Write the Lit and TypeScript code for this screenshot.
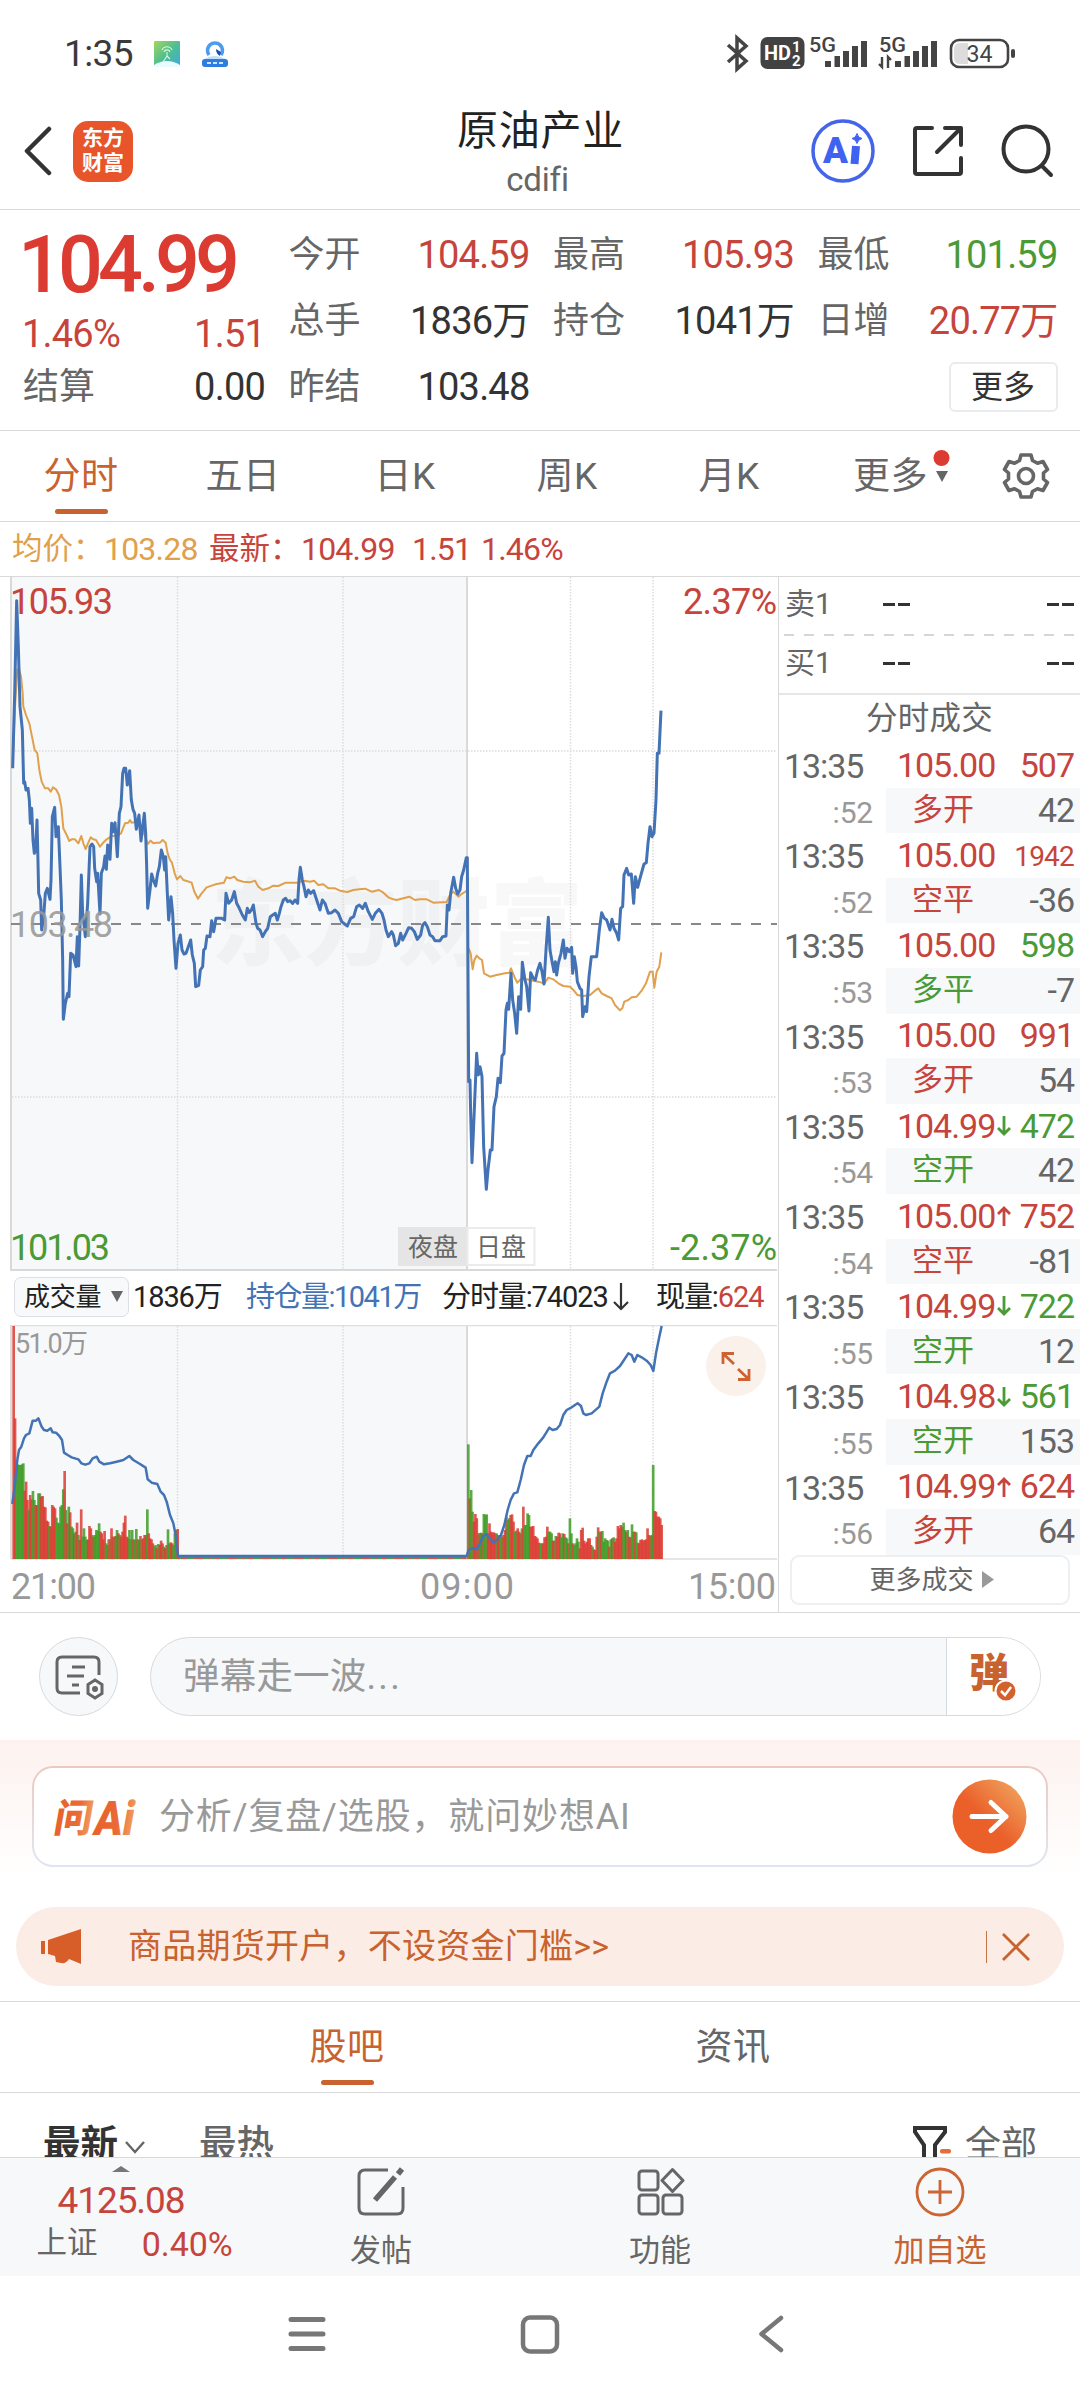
import { LitElement, html, svg, css } from "lit";
import { customElement } from "lit/decorators.js";
import { classMap } from "lit/directives/class-map.js";

/* Traced series, in thirds of a CSS pixel. */
const NIGHT_PRICE = "38,625 44,400 50,122 55,260 60,440 67,510 71,670 74,665 78,690 84,685 88,720 91,790 95,745 99,840 103,880 107,870 111,780 113,860 116,1000 122,1020 125,1110 131,1070 136,1000 142,985 150,1018 153,960 157,770 164,742 168,830 175,800 180,920 184,1020 188,1200 190,1378 196,1330 203,1300 207,1310 212,1180 219,1185 228,1220 232,1130 236,1218 240,1100 244,945 248,1060 256,1130 263,1030 270,860 276,852 281,860 284,925 290,965 293,940 300,1062 304,940 311,920 315,888 319,928 323,855 330,898 335,790 340,815 345,788 352,890 358,760 363,740 368,640 372,625 377,625 382,675 389,632 394,720 399,748 404,760 409,808 417,765 423,843 428,800 433,760 437,820 440,920 443,1045 450,990 455,942 460,960 467,978 473,940 478,920 484,870 490,890 494,930 497,890 502,1000 506,1080 513,1010 518,1060 522,1140 528,1225 534,1150 541,1125 546,1170 552,1182 558,1180 565,1160 572,1140 577,1185 583,1210 587,1280 596,1276 601,1230 608,1220 611,1170 616,1165 621,1128 630,1130 635,1082 641,1115 648,1075 656,1075 665,1075 674,1080 678,1000 686,1030 695,1020 703,995 710,1030 718,1045 727,1065 736,1080 742,1045 748,1058 754,1050 760,1035 768,1090 773,1105 780,1110 788,1130 796,1115 803,1105 811,1070 818,1065 826,1060 832,1080 838,1060 843,1040 850,1020 857,1015 863,1025 870,1022 878,1030 885,1020 893,1030 897,960 901,922 907,960 912,980 918,1010 925,990 932,1000 941,992 950,1020 960,1050 967,1020 975,1030 985,1060 995,1058 1005,1050 1015,1060 1025,1085 1034,1092 1042,1098 1052,1075 1061,1070 1070,1040 1078,1035 1088,1045 1096,1030 1105,1055 1117,1078 1126,1060 1137,1048 1146,1060 1152,1080 1158,1110 1165,1130 1175,1115 1180,1125 1187,1157 1195,1150 1202,1120 1208,1140 1218,1120 1226,1103 1235,1105 1243,1115 1252,1138 1262,1125 1268,1095 1275,1088 1282,1100 1290,1125 1298,1130 1305,1142 1320,1142 1328,1130 1338,1128 1342,1035 1347,1050 1352,1000 1361,952 1367,985 1373,1002 1380,990 1385,950 1391,930 1399,893 1402,893 1406,1565";
const DAY_PRICE = "1406,1565 1410,1560 1412,1660 1416,1808 1420,1720 1430,1480 1435,1545 1440,1520 1446,1550 1451,1760 1459,1888 1464,1830 1471,1770 1476,1770 1482,1640 1489,1610 1494,1555 1501,1568 1506,1488 1512,1480 1518,1350 1522,1330 1526,1348 1533,1240 1538,1320 1544,1360 1550,1420 1556,1310 1562,1348 1567,1207 1574,1255 1580,1280 1587,1353 1592,1238 1600,1255 1606,1260 1613,1230 1620,1210 1626,1235 1632,1272 1638,1170 1645,1072 1650,1170 1657,1210 1662,1235 1666,1205 1670,1245 1675,1210 1683,1180 1690,1140 1695,1195 1701,1165 1708,1175 1715,1162 1718,1240 1723,1190 1728,1220 1732,1265 1740,1285 1745,1290 1748,1370 1755,1340 1760,1355 1767,1250 1774,1190 1790,1190 1798,1110 1805,1058 1813,1075 1820,1080 1830,1110 1836,1078 1842,1105 1850,1120 1856,1140 1862,1045 1868,1040 1872,945 1880,925 1886,945 1894,942 1901,1030 1906,950 1913,982 1920,955 1927,930 1932,912 1939,908 1944,850 1950,800 1956,830 1962,820 1968,720 1972,580 1977,580 1983,452";
const NIGHT_AVG = "38,610 45,440 52,328 58,330 63,350 68,400 70,440 78,465 88,490 96,530 104,570 112,580 118,630 125,665 135,685 145,685 152,695 159,682 168,688 177,705 184,740 190,805 200,825 208,843 215,838 225,838 235,850 244,828 250,850 257,867 264,850 272,832 280,838 288,840 300,860 308,850 320,838 335,828 350,828 363,820 375,790 385,788 390,780 395,788 410,785 425,800 443,852 452,842 460,850 470,848 480,848 488,840 497,848 503,880 510,900 516,908 524,940 531,958 541,948 550,960 560,963 575,968 583,995 594,1016 605,1000 620,982 635,977 650,972 672,968 679,952 690,955 703,950 712,960 730,965 750,967 765,962 775,980 788,990 805,985 820,977 835,978 857,968 880,968 893,968 912,962 930,965 942,962 955,975 970,973 985,985 1005,985 1020,992 1042,996 1060,990 1078,988 1095,986 1115,995 1137,990 1150,998 1165,1012 1180,1018 1190,1020 1210,1015 1228,1010 1245,1020 1260,1018 1280,1018 1300,1028 1340,1026 1350,1005 1360,995 1375,1010 1388,1000 1399,993";
const DAY_AVG = "1406,1165 1412,1180 1418,1228 1423,1200 1430,1187 1438,1195 1446,1200 1452,1240 1470,1250 1490,1245 1515,1240 1528,1238 1533,1225 1545,1255 1552,1268 1562,1258 1580,1258 1600,1262 1615,1265 1625,1268 1632,1272 1645,1253 1660,1258 1675,1270 1690,1278 1710,1280 1720,1290 1732,1305 1750,1308 1770,1305 1785,1292 1795,1285 1805,1300 1820,1308 1835,1315 1845,1335 1860,1351 1867,1345 1873,1325 1885,1320 1895,1312 1910,1310 1925,1292 1938,1270 1950,1235 1958,1235 1963,1283 1970,1235 1978,1220 1984,1177";
const OPEN_INTEREST = "37,912 45,850 52,780 57,750 64,740 72,715 78,705 88,700 98,662 108,662 115,655 125,680 132,690 142,692 152,685 158,697 168,698 178,708 186,720 192,758 203,765 215,772 235,778 244,790 256,794 268,790 278,775 290,770 298,785 312,793 330,790 350,785 370,780 388,768 400,780 420,792 437,803 443,838 455,848 472,852 482,875 492,885 500,905 510,945 520,970 528,1010 534,1068 1400,1068 1406,1050 1415,1045 1430,1048 1440,1030 1450,1008 1460,1003 1470,1015 1482,1028 1493,1018 1503,1005 1513,975 1523,930 1532,900 1542,880 1552,877 1562,840 1572,795 1582,768 1592,768 1600,750 1615,730 1630,712 1648,683 1658,690 1670,687 1680,675 1690,645 1700,630 1715,622 1733,610 1743,618 1750,640 1758,645 1775,640 1798,620 1808,580 1820,545 1830,520 1845,512 1860,498 1872,480 1885,460 1895,465 1903,485 1912,465 1925,472 1940,482 1952,495 1960,513 1968,460 1978,410 1985,378";

const NIGHT_VOL = "378r 655r 780g 793g 795g 795g 793g 790g 872r 845r 900r 930g 885r 898r 873g 900g 915r 915r 880g 880g 890r 888r 920r 922r 962r 965r 978g 980r 915r 920r 925r 953g 968g 970g 920g 915g 868g 813r 930g 970r 920g 937r 980g 985g 1000r 995g 968r 1005g 1020r 928r 1010g 985g 1010g 1020g 1018r 978r 985r 1005g 1010r 1005g 990g 992g 970g 995r 1000r 1018r 993r 1030g 1035g 1018r 1018g 985r 1010r 1010g 1008r 990g 1000r 1005g 1010r 995r 968r 947r 1010r 1015r 990g 1018g 990g 1018r 1020g 987g 1018r 1020g 1008r 1018g 1015r 1005r 1005r 928g 1000r 1015r 1018r 1030r 1040g 1035g 1045r 1032g 1035r 1022r 1030r 1040g 1045r 1035r 988g 1030g 1027r 1030r 1035g 1000g 990g 987r";
const DAY_VOL = "733g 895r 870g 935g 965r 942r 955r 1000g 1000r 998g 1000r 942g 945g 943g 1000r 970r 995r 998r 997r 1000r 1000g 1005r 1015r 1005g 1010g 1005r 990r 950r 960g 955g 945r 943r 965r 995g 992g 985r 995r 1000r 985g 920r 975g 975g 940g 945g 980r 980r 978r 1008r 1010r 1015r 1028r 1030g 1030g 1030r 1012r 1010r 980r 995g 995g 1000g 1022r 1022r 1008g 1010r 998r 1000r 1012g 1000g 1002r 1012g 1015g 1030r 955g 1000g 1030r 1035g 1030g 1015g 1025g 1045r 990r 983r 1022r 1030r 1025r 1015r 1015r 1035r 1040g 1048r 1050r 1010r 982r 995g 995r 993g 1025g 1015g 1020g 1022g 1040r 1018g 1015r 1012g 1025r 1015r 978r 985r 975r 980r 968g 990g 995r 990g 1010r 1012r 973g 995g 995r 997g 1028g 1030r 1020r 1018r 1022r 1020r 1018r 985r 1005r 1008g 1005r 795g 933r 935r 950r 950r 955r 975r";

const BASE = 1077;
const bars = (src: string, x0: number, x1: number) => {
  const items = src.split(" ");
  const step = (x1 - x0) / (items.length - 1);
  return items.map((t, i) => {
    const top = parseInt(t, 10);
    return svg`<rect class=${t.endsWith("g") ? "bg" : "br"} x=${x0 + i * step - 4} y=${top} width="8" height=${BASE - top}/>`;
  });
};

const TRADES: [string, string, string, string, string, string, string, string][] = [
  // second, price, arrow, volume, volume tone, kind, kind tone, change
  ["52", "105.00", "", "507", "up", "多开", "up", "42"],
  ["52", "105.00", "", "1942", "up", "空平", "up", "-36"],
  ["53", "105.00", "", "598", "down", "多平", "down", "-7"],
  ["53", "105.00", "", "991", "up", "多开", "up", "54"],
  ["54", "104.99", "d", "472", "down", "空开", "down", "42"],
  ["54", "105.00", "u", "752", "up", "空平", "up", "-81"],
  ["55", "104.99", "d", "722", "down", "空开", "down", "12"],
  ["55", "104.98", "d", "561", "down", "空开", "down", "153"],
  ["56", "104.99", "u", "624", "up", "多开", "up", "64"],
];

const shared = css`
  :host { display: block; font-family: Roboto, "Noto Sans CJK SC", sans-serif; color: #333; }
  * { box-sizing: border-box; }
  svg { display: block; flex: none; }
  .up { color: #c6443c; }
  .down { color: #4a9a35; }
`;

@customElement("status-bar")
class StatusBar extends LitElement {
  static styles = [shared, css`
    .bar { display: flex; align-items: center; height: 108px; padding: 0 64px; justify-content: space-between; }
    .left { display: flex; align-items: center; }
    .time { font-size: 37px; letter-spacing: -0.6px; margin-right: 21px; color: #3a3a3a; line-height: 40px; }
    .a { margin-right: 22px; }
  `];
  render() {
    return html`<div class="bar">
      <div class="left">
        <span class="time">1:35</span>
        <svg class="a" width="26" height="26" viewBox="0 0 26 26">
          <defs><linearGradient id="g" x1="0" y1="0" x2="1" y2="1"><stop offset="0" stop-color="#a4d65e"/><stop offset=".5" stop-color="#4fbf8f"/><stop offset="1" stop-color="#3fa9e0"/></linearGradient></defs>
          <rect width="26" height="26" rx="1" fill="url(#g)"/>
          <g fill="none" stroke="#d9f5dc" stroke-width="1.1"><path d="M8 9a5.5 5.5 0 0 1 10 0M10 11a3.2 3.2 0 0 1 6 0M13 11v4l-4 6M13 15l3 3"/></g>
          <path d="M0 24Q13 16 26 24V26H0Z" fill="#e9fbff"/>
        </svg>
        <svg width="26" height="26" viewBox="0 0 26 26">
          <path d="M7 14a7.500 7.500 0 1 1 12 0" fill="none" stroke="#4b9cf0" stroke-width="3.6"/>
          <path d="M14 8l5 3-1 4q-4-2-4-7z" fill="#1c4fae"/>
          <path d="M2 18Q13 12 24 18z" fill="#bfe0ff"/>
          <rect y="18" width="26" height="8" rx="3" fill="#2f7be0"/>
          <path d="M5 22h4M11 22h4M17 22h4" stroke="#cfe4ff" stroke-width="2"/>
        </svg>
      </div>
      <svg width="290" height="40" viewBox="726 34 290 40">
        <path d="M728 45l18 16-9 8V38l9 8-18 16" fill="none" stroke="#444" stroke-width="3.500"/>
        <rect x="760.500" y="37" width="44" height="32" rx="7" fill="#424242"/>
        <g fill="#fff" font-weight="700"><text x="764" y="60" font-size="20" textLength="27" lengthAdjust="spacingAndGlyphs">HD</text><text x="792" y="52" font-size="15">1</text><text x="792" y="66" font-size="15">2</text></g>
        <g fill="#444" font-weight="500" font-size="20"><text x="809" y="52" textLength="27" lengthAdjust="spacingAndGlyphs">5G</text><text x="879" y="52" textLength="27" lengthAdjust="spacingAndGlyphs">5G</text></g>
        <g fill="#444">
          <rect x="825" y="61" width="6" height="6"/><rect x="834.500" y="56" width="5.500" height="11"/><rect x="843" y="51" width="6" height="16"/><rect x="852" y="46" width="6" height="21"/><rect x="861" y="41" width="6" height="26"/>
          <rect x="895" y="61" width="6" height="6"/><rect x="904.500" y="56" width="5.500" height="11"/><rect x="913" y="51" width="6" height="16"/><rect x="922" y="46" width="6" height="21"/><rect x="931" y="41" width="6" height="26"/>
        </g>
        <path d="M882 57v10l-3-3M888 68V57l3 3" fill="none" stroke="#444" stroke-width="2.4"/>
        <rect x="951" y="40" width="57" height="27" rx="8" fill="#fff" stroke="#444" stroke-width="2.6"/>
        <path d="M960 43h8v21h-8q-6 0-6-6v-9q0-6 6-6z" fill="#dcdcdc"/>
        <rect x="1011" y="49" width="4" height="9" rx="2" fill="#444"/>
        <text x="966.500" y="62" font-size="23" fill="#444" textLength="26" lengthAdjust="spacingAndGlyphs">34</text>
      </svg>
    </div>`;
  }
}

@customElement("title-bar")
class TitleBar extends LitElement {
  static styles = [shared, css`
    .bar { height: 102px; border-bottom: 1px solid #d9d9d9; display: grid; grid-template-columns: 393px 1fr 391px; padding: 0 25px 0 22px; }
    .left { display: flex; align-items: center; height: 86px; }
    .logo { width: 60px; height: 61px; border-radius: 15px; background: #e9552b; color: #fff; font-weight: 700; font-size: 21px; line-height: 25px; text-align: center; padding-top: 5px; margin-left: 20px; }
    .mid { display: flex; flex-direction: column; align-items: center; }
    .name { font-size: 41px; line-height: 46px; letter-spacing: .8px; color: #222; margin-right: -2px; }
    .code { font-size: 33px; line-height: 40px; letter-spacing: -.2px; color: #666; margin: 6px 4px 0 0; }
    .right { display: flex; align-items: center; justify-content: flex-end; height: 86px; }
    .b { margin: 0 37px; }
  `];
  render() {
    return html`<div class="bar">
      <div class="left">
        <svg width="31" height="50" viewBox="0 0 31 50"><path d="M27 3L5 25 27 47" fill="none" stroke="#333" stroke-width="4.5" stroke-linecap="round" stroke-linejoin="round"/></svg>
        <div class="logo">东方<br>财富</div>
      </div>
      <div class="mid"><span class="name">原油产业</span><span class="code">cdifi</span></div>
      <div class="right">
        <svg width="64" height="64" viewBox="0 0 64 64">
          <circle cx="32" cy="32" r="30" fill="none" stroke="#4464ea" stroke-width="3.500"/>
          <text x="12" y="43.500" font-size="36" font-weight="900" fill="#3f62f0" textLength="25" lengthAdjust="spacingAndGlyphs">A</text>
          <path d="M45 27L43.500 45" stroke="#3f62f0" stroke-width="8"/>
          <path d="M46 14.500q1 4.500 5 5q-4 1-5 5q-1-4-5-5q4-.5 5-5z" fill="#3f62f0" stroke="#3f62f0"/>
        </svg>
        <svg class="b" width="52" height="52" viewBox="0 0 52 52"><path d="M20 3H5q-2 0-2 2v42q0 2 2 2h42q2 0 2-2V33M33 3h16v17M49 3L25 27" fill="none" stroke="#333" stroke-width="4" stroke-linecap="round" stroke-linejoin="round"/></svg>
        <svg width="54" height="54" viewBox="0 0 54 54"><circle cx="25" cy="25" r="22.500" fill="none" stroke="#333" stroke-width="4"/><path d="M41 42l9 9" stroke="#333" stroke-width="4" stroke-linecap="round"/></svg>
      </div>
    </div>`;
  }
}

@customElement("quote-panel")
class QuotePanel extends LitElement {
  static styles = [shared, css`
    .panel { height: 221px; border-bottom: 1px solid #d9d9d9; padding: 12px 23px 0 22px; display: grid; grid-template-columns: 243px 240px 240px 239px; column-gap: 24.500px; font-size: 38px; letter-spacing: -.8px; }
    .col { display: flex; flex-direction: column; }
    .row { display: flex; justify-content: space-between; align-items: center; height: 66px; line-height: 66px; white-space: nowrap; }
    .label { color: #666; font-size: 36px; letter-spacing: .1px; margin-left: -1px; }
    .price { height: 86px; line-height: 86px; font-size: 79px; font-weight: 500; letter-spacing: -4.900px; margin-left: -4px; color: #dc3b32; }
    .chg { height: 46px; line-height: 46px; margin-top: 3px; margin-bottom: -3px; }
    .chg + .row .label { margin-left: 1px; }
    .more { width: 109px; height: 50px; line-height: 47px; margin: -1px 0 0 auto; text-align: center; border: 2px solid #e9ebee; border-radius: 6px; font-size: 32px; letter-spacing: 0; }
  `];
  cell(label: string, value: string, tone = "") {
    return html`<div class="row"><span class="label">${label}</span><span class=${tone}>${value}</span></div>`;
  }
  render() {
    return html`<div class="panel">
      <div class="col">
        <div class="price">104.99</div>
        <div class="row chg up"><span>1.46%</span><span>1.51</span></div>
        ${this.cell("结算", "0.00")}
      </div>
      <div class="col">${this.cell("今开", "104.59", "up")}${this.cell("总手", "1836万")}${this.cell("昨结", "103.48")}</div>
      <div class="col">${this.cell("最高", "105.93", "up")}${this.cell("持仓", "1041万")}</div>
      <div class="col">${this.cell("最低", "101.59", "down")}${this.cell("日增", "20.77万", "up")}<div class="row"><span class="more">更多</span></div></div>
    </div>`;
  }
}

@customElement("period-tabs")
class PeriodTabs extends LitElement {
  static styles = [shared, css`
    .tabs { height: 91px; border-bottom: 1px solid #d9d9d9; display: flex; font-size: 37px; color: #666; }
    .tab { width: 162px; flex: none; display: flex; flex-direction: column; align-items: center; line-height: 91px; height: 90px; letter-spacing: .5px; }
    .on { color: #c8622f; }
    .line { width: 53px; height: 5px; border-radius: 3px; background: #c8622f; margin-top: -13px; }
    .more { width: 143px; flex-direction: row; padding-left: 43px; white-space: nowrap; }
    .flag { margin: -16px 0 0 3px; }
    .gear { margin: 20px 0 0 48px; }
  `];
  render() {
    return html`<div class="tabs">
      ${["分时", "五日", "日K", "周K", "月K"].map((t, i) => html`<div class=${classMap({ tab: true, on: i === 0 })}>${t}${i === 0 ? html`<span class="line"></span>` : ""}</div>`)}
      <div class="tab more">更多<svg class="flag" width="20" height="44" viewBox="0 0 20 44"><circle cx="10.500" cy="12" r="8" fill="#dc3b32"/><path d="M5 25h12l-6 11z" fill="#666"/></svg></div>
      <svg class="gear" width="50" height="50" viewBox="-25 -25 50 50" fill="none" stroke="#666" stroke-width="3.600" stroke-linejoin="round">
        <path d="M-5-21H5L6.500-15.500L11.500-12.700L17-14.500L21.500-6.500L17.500-3V3L21.500 6.500L17 14.500L11.500 12.700L6.500 15.500L5 21H-5L-6.500 15.500L-11.500 12.700L-17 14.500L-21.500 6.500L-17.500 3V-3L-21.500-6.500L-17-14.500L-11.500-12.700L-6.500-15.500Z"/><circle r="7.500"/>
      </svg>
    </div>`;
  }
}

@customElement("price-chart")
class PriceChart extends LitElement {
  static styles = [shared, css`
    .t36 { font-size: 36px; }
    .red { fill: #c6443c; } .green { fill: #4a9a35; } .gray { fill: #999; }
    .grid { stroke: #dcdcdc; stroke-width: 1.500; stroke-dasharray: 1.500 1.500; fill: none; }
    .axis { stroke: #d9d9d9; stroke-width: 2; fill: none; }
    .price { fill: none; stroke: #4473b5; stroke-width: 9; stroke-linejoin: round; }
    .avg { fill: none; stroke: #e0a04c; stroke-width: 6; stroke-linejoin: round; }
    .oi { fill: none; stroke: #4473b5; stroke-width: 7.500; stroke-linejoin: round; }
    .br { fill: #db3c33; fill-opacity: .85; } .bg { fill: #3f9c27; fill-opacity: .85; }
    .mark { font-family: "Noto Sans CJK SC", sans-serif; font-weight: 900; font-size: 94px; fill: #000; fill-opacity: .028; }
    .tag { font-size: 25px; fill: #666; }
    .info { height: 54px; display: flex; align-items: center; padding-left: 14px; font-size: 29px; letter-spacing: -1.100px; line-height: 50px; white-space: nowrap; color: #222; padding-bottom: 3px; }
    .select { flex: none; display: flex; align-items: center; gap: 10px; width: 115px; height: 40px; border: 1px solid #dcdfe4; border-radius: 7px; background: #f8f9fb; padding-left: 9px; font-size: 26px; letter-spacing: -.3px; line-height: 36px; }
    .v1 { width: 111px; padding-left: 4px; } .v1, .v2, .v3, .v4 { flex: none; }
    .v1 { margin-right: 6px; } .v2 { width: 196px; letter-spacing: -1.500px; color: #4473b5; } .v3 { width: 214px; display: flex; align-items: center; } .v4 { width: 110px; }
  `];
  render() {
    return html`
      <svg width="778" height="694" viewBox="0 577 778 694">
        <rect x="12" y="577" width="455" height="693" fill="#f7f8fa"/>
        <text class="mark" x="211" y="958" textLength="372" lengthAdjust="spacingAndGlyphs">东方财富</text>
        <path class="grid" d="M177.500 577V1270M343 577V1270M570.500 577V1270M653 577V1270M12 751H777M12 1097H777"/>
        <path d="M467 577V1270" stroke="#dadada" stroke-width="2"/>
        <path class="axis" d="M11 577V1270H777"/>
        <path d="M11 924H777" stroke="#888" stroke-width="2" stroke-dasharray="10 10"/>
        <g transform="translate(0 560) scale(.33333)">
          <polyline class="avg" points=${NIGHT_AVG}/><polyline class="avg" points=${DAY_AVG}/>
          <polyline class="price" points=${NIGHT_PRICE + " " + DAY_PRICE}/>
        </g>
        <rect x="398" y="1227" width="69" height="39" fill="#e5e5e5"/>
        <rect x="467.500" y="1228" width="67" height="37" fill="#fff" stroke="#ebebeb" stroke-width="2"/>
        <text class="tag" x="408" y="1255.500">夜盘</text><text class="tag" x="476" y="1255.500">日盘</text>
        <g class="t36">
          <text class="red" x="10" y="614" textLength="103">105.93</text>
          <text class="gray" x="10" y="937" textLength="103" fill-opacity=".9">103.48</text>
          <text class="green" x="10" y="1260" textLength="100">101.03</text>
          <text class="red" x="683" y="614" textLength="94">2.37%</text>
          <text class="green" x="670" y="1260" textLength="107">-2.37%</text>
        </g>
      </svg>
      <div class="info">
        <span class="select">成交量<svg width="12" height="11" viewBox="0 0 12 11"><path d="M0 0h12L6 11z" fill="#666"/></svg></span>
        <span class="v1">1836万</span><span class="v2">持仓量:1041万</span>
        <span class="v3">分时量:74023<svg width="22" height="30" viewBox="0 0 22 30"><path d="M13 1v26M6 20l7 7 7-7" fill="none" stroke="#333" stroke-width="2.200"/></svg></span>
        <span class="v4">现量:<span class="up">624</span></span>
      </div>
      <svg width="778" height="287" viewBox="0 1325 778 287">
        <rect x="12" y="1326" width="455" height="233" fill="#f7f8fa"/>
        <path class="grid" d="M177.500 1326V1559M343 1326V1559M570.500 1326V1559M653 1326V1559"/>
        <path d="M467 1326V1559" stroke="#dadada" stroke-width="2"/>
        <path d="M11 1325.500H777M11 1559H777" stroke="#dedede" stroke-width="1.500" fill="none"/>
        <path d="M11 1325V1559" stroke="#dedede" stroke-width="2"/>
        <g transform="translate(0 1200) scale(.33333)">
          <path d="M534 1074H1400" stroke="#c25a4a" stroke-width="6"/><path d="M534 1074H1400" stroke="#4e9a55" stroke-width="6" stroke-dasharray="9 17 22 30 14 8"/>
          ${bars(NIGHT_VOL, 41, 533)}${bars(DAY_VOL, 1405, 1985)}
          <polyline class="oi" points=${OPEN_INTEREST}/>
        </g>
        <text x="15" y="1353" font-size="27" class="gray" textLength="73">51.0万</text>
        <circle cx="736" cy="1366" r="30" fill="#fbf1eb"/>
        <path d="M723 1364V1353.500H734M723 1353.500L734 1364M749 1369V1379.500H738M749 1379.500L738 1369" fill="none" stroke="#cf6231" stroke-width="2.800"/>
        <g class="t36 gray">
          <text x="11" y="1599" textLength="85">21:00</text><text x="420" y="1599" textLength="94">09:00</text><text x="688" y="1599" textLength="88">15:00</text>
        </g>
      </svg>`;
  }
}

@customElement("trade-tape")
class TradeTape extends LitElement {
  static styles = [shared, css`
    :host { border-left: 1px solid #d9d9d9; height: 1035px; color: #666; }
    .depth { display: grid; grid-template-columns: 98px 1fr auto; height: 57px; align-items: center; padding: 0 6px 2px 6px; font-size: 30px; }
    .lab { margin-top: -1px; line-height: 44px; }
    .ask { height: 57px; }
    .dash { width: 27px; height: 3px; background: linear-gradient(90deg, #333 12px, transparent 12px 15px, #333 15px); }
    .sep { height: 2px; margin: 0 5px; background: repeating-linear-gradient(90deg, #d6d6da 0 10px, transparent 10px 20px); }
    .head { border-top: 2px solid #e6e6e6; height: 50px; line-height: 47px; text-align: center; font-size: 31.500px; letter-spacing: .2px; }
    .list { display: grid; }
    .trade { display: grid; grid-template-columns: 107px 1fr; grid-template-rows: 44.600px 45.600px; font-size: 34px; letter-spacing: -1.050px; }
    .time { padding-left: 5px; line-height: 46px; }
    .sec { font-size: 30px; color: #999; text-align: right; padding-right: 13px; line-height: 49px; letter-spacing: -.2px; }
    .top { display: flex; align-items: center; padding: 0 6px 0 11px; line-height: 45px; }
    .vol { margin-left: auto; }
    .small { font-size: 28px; letter-spacing: -.8px; padding-top: 2px; }
    .sub { background: #f7f8fa; display: flex; justify-content: space-between; padding: 0 6px 0 26px; line-height: 45px; }
    .kind { font-size: 31px; letter-spacing: 0; line-height: 43px; }
    .more { margin: 0 10px 0 11px; height: 50px; border: 2px solid #eeeff1; border-radius: 9px; display: flex; align-items: center; justify-content: center; gap: 8px; font-size: 26px; line-height: 44px; padding-left: 3px; }
  `];
  render() {
    return html`
      <div class="depth ask"><span class="lab">卖1</span><span class="dash"></span><span class="dash"></span></div>
      <div class="sep"></div>
      <div class="depth"><span class="lab">买1</span><span class="dash"></span><span class="dash"></span></div>
      <div class="head">分时成交</div>
      <div class="list">${TRADES.map(([s, p, a, v, vt, k, kt, c]) => html`<div class="trade">
        <span class="time">13:35</span>
        <span class="top"><span class="up">${p}</span>${a ? html`<svg class=${a === "u" ? "up" : "down"} width="17" height="22" viewBox="0 0 17 22"><path d=${a === "u" ? "M9 21V3M3 9l6-6 6 6" : "M9 1v18M3 13l6 6 6-6"} fill="none" stroke="currentColor" stroke-width="2.800"/></svg>` : ""}<span class=${classMap({ vol: true, small: v.length > 3, [vt]: true })}>${v}</span></span>
        <span class="sec">:${s}</span>
        <span class="sub"><span class=${"kind " + kt}>${k}</span><span>${c}</span></span>
      </div>`)}</div>
      <div class="more">更多成交<svg width="12" height="17" viewBox="0 0 12 17"><path d="M0 0l12 8.500L0 17z" fill="#999"/></svg></div>`;
  }
}

@customElement("comment-entry")
class CommentEntry extends LitElement {
  static styles = [shared, css`
    .row { display: flex; align-items: flex-start; padding: 24px 39px 0 39px; height: 128px; border-top: 1px solid #d9d9d9; }
    .round { width: 79px; height: 79px; border-radius: 50%; border: 1.500px solid #d6dade; background: #f7f8fa; display: grid; place-items: center; margin-right: 32px; }
    .pill { flex: 1; height: 79px; border: 1.500px solid #d6dade; border-radius: 40px; display: flex; background: #f7f8fa; }
    .hint { flex: 1; padding-left: 32px; line-height: 77px; font-size: 36.500px; letter-spacing: .2px; color: #999; }
    .dots { letter-spacing: 2.200px; }
    .btn { width: 94px; background: #fff; border-left: 1.500px solid #d6dade; border-radius: 0 40px 40px 0; padding-left: 22px; display: flex; align-items: center; }
    .glyph { font-size: 40px; font-weight: 900; line-height: 60px; color: #c8622f; margin-top: -5px; }
    .tick { margin: 28px 0 0 -15px; }
  `];
  render() {
    return html`<div class="row">
      <div class="round"><svg width="50" height="46" viewBox="0 0 50 46" fill="none" stroke="#666" stroke-width="3"><path d="M26 39H8q-5 0-5-5V8q0-5 5-5h32q5 0 5 5v13M18 13h13M13 22h17M18 31h7"/><path d="M41 26l7 4.500v9L41 44l-7-4.500v-9z"/><circle cx="41" cy="35" r="1.500"/></svg></div>
      <div class="pill"><span class="hint">弹幕走一波<span class="dots">...</span></span><span class="btn">
        <span class="glyph">弹</span><svg class="tick" width="24" height="24" viewBox="0 0 24 24"><circle cx="12" cy="12" r="10.500" fill="#d4622c" stroke="#fff" stroke-width="2"/><path d="M7 12l4 4 6-8" fill="none" stroke="#fff" stroke-width="2.500"/></svg>
      </span></div>
    </div>`;
  }
}

@customElement("ask-ai")
class AskAi extends LitElement {
  static styles = [shared, css`
    .wrap { height: 167px; padding: 26px 32px; background: linear-gradient(#fdf2ef, #fff 84%); }
    .edge { height: 101px; border-radius: 21px; padding: 2px; background: linear-gradient(#ecc9bf, #dfe6f1); }
    .card { height: 97px; border-radius: 19px; background: #fff; display: flex; align-items: center; padding: 0 19px 0 10px; }
    .text { flex: 1; font-size: 36px; letter-spacing: .85px; color: #999; margin-left: 18px; line-height: 94px; white-space: nowrap; }
  `];
  render() {
    return html`<div class="wrap"><div class="edge"><div class="card">
      <svg width="97" height="80" viewBox="-8 -18 97 80"><defs><linearGradient id="q" x1="0" x2="1"><stop offset="0" stop-color="#e8612c"/><stop offset=".6" stop-color="#ea6a36"/><stop offset="1" stop-color="#f0a05e"/></linearGradient></defs>
        <g transform="skewX(-10)" fill="url(#q)" font-weight="900"><text x="7" y="37" font-size="39" textLength="38" lengthAdjust="spacingAndGlyphs">问</text><text x="47" y="39.500" font-size="48" textLength="40" lengthAdjust="spacingAndGlyphs">Ai</text></g></svg>
      <span class="text">分析/复盘/选股，就问妙想AI</span>
      <svg width="75" height="75" viewBox="0 0 75 75"><defs><linearGradient id="c" x1=".2" y1=".8" x2=".9" y2=".1"><stop offset=".35" stop-color="#eb5f29"/><stop offset="1" stop-color="#f0a05c"/></linearGradient></defs><circle cx="37.500" cy="37.500" r="37" fill="url(#c)"/><path d="M20 37.500H54M39 23.500L54 37.500 39 51.500" fill="none" stroke="#fff" stroke-width="5" stroke-linecap="round" stroke-linejoin="round"/></svg>
    </div></div></div>`;
  }
}

@customElement("promo-banner")
class PromoBanner extends LitElement {
  static styles = [shared, css`
    .banner { margin: 0 16px 15px; height: 79px; border-radius: 40px; background: #fbede5; display: flex; align-items: center; padding: 0 34px 0 25px; color: #c8622f; }
    .text { flex: 1; margin-left: 46px; font-size: 34px; letter-spacing: .25px; line-height: 77px; }
    .bar { width: 1.500px; height: 32px; background: #c8744b; margin-right: 15px; }
  `];
  render() {
    return html`<div class="banner">
      <svg width="41" height="36" viewBox="0 0 41 36"><path d="M0 12h4v13H0zM7 11L40 0v35l-12-5q-3 5-8 4l-5-1-1-6-7-2z" fill="#d75e29"/></svg>
      <span class="text">商品期货开户，不设资金门槛&gt;&gt;</span><span class="bar"></span>
      <svg width="28" height="28" viewBox="0 0 28 28"><path d="M1 1l26 26M27 1L1 27" stroke="#c8622f" stroke-width="2.800"/></svg>
    </div>`;
  }
}

@customElement("forum-section")
class ForumSection extends LitElement {
  static styles = [shared, css`
    .tabs { height: 92px; border: 1px solid #d9d9d9; border-width: 1px 0; display: flex; justify-content: center; font-size: 37px; color: #666; }
    .tab { width: 386px; display: flex; flex-direction: column; align-items: center; line-height: 92px; letter-spacing: .5px; }
    .on { color: #c8622f; }
    .line { width: 53px; height: 5px; border-radius: 3px; background: #c8622f; margin-top: -14px; }
    .sort { height: 64px; overflow: hidden; display: flex; padding: 21px 43px 0; font-size: 37.500px; line-height: 60px; color: #666; }
    .cur { font-weight: 700; color: #333; }
    .hot { font-weight: 500; margin-left: 54px; }
    .chev { margin: 27px 0 0 7px; }
    .fil { margin: 11px 14px 0 auto; }
    .all { font-size: 36px; line-height: 62px; }
  `];
  render() {
    return html`<div class="tabs"><div class="tab on">股吧<span class="line"></span></div><div class="tab">资讯</div></div>
      <div class="sort"><span class="cur">最新</span><svg class="chev" width="20" height="13" viewBox="0 0 20 13"><path d="M1 1l9 10 9-10" fill="none" stroke="#666" stroke-width="2.400"/></svg><span class="hot">最热</span>
        <svg class="fil" width="38" height="44" viewBox="0 0 38 44"><path d="M11 42V20L2 7V3H32V7L22 20V42" fill="none" stroke="#333" stroke-width="4"/><rect x="27" y="24" width="11" height="4.500" rx="2" fill="#e07038"/></svg><span class="all">全部</span></div>`;
  }
}

@customElement("bottom-bar")
class BottomBar extends LitElement {
  static styles = [shared, css`
    .bar { height: 119px; border-top: 1px solid #d9d9d9; background: #f7f8fa; display: grid; grid-template-columns: 242px 278px 280px 280px; }
    .index { display: flex; flex-direction: column; align-items: center; padding-top: 8px; }
    .num { font-size: 37px; letter-spacing: -1.100px; line-height: 40px; margin-top: 9px; }
    .pair { display: flex; justify-content: space-between; width: 196px; font-size: 34px; letter-spacing: -.1px; line-height: 46px; margin-left: 27px; }
    .cn { font-size: 30.500px; letter-spacing: 0; color: #666; line-height: 43px; }
    .item { display: flex; flex-direction: column; align-items: center; padding-top: 9px; font-size: 31px; color: #666; line-height: 46px; gap: 11px; }
    .hot { color: #c8622f; }
  `];
  render() {
    return html`<div class="bar">
      <div class="index"><svg width="18" height="6" viewBox="0 0 18 6"><path d="M0 6L9 0l9 6z" fill="#777"/></svg><span class="num up">4125.08</span><div class="pair"><span class="cn">上证</span><span class="up">0.40%</span></div></div>
      <div class="item"><svg width="50" height="50" viewBox="0 0 50 50" fill="none" stroke="#666" stroke-width="3"><path d="M32 3H9q-6 0-6 6v32q0 6 6 6h32q6 0 6-6V20"/><path d="M19 33l20-23M42 7l4-5" stroke-width="5.500"/></svg>发帖</div>
      <div class="item"><svg width="50" height="50" viewBox="0 0 50 50" fill="none" stroke="#666" stroke-width="3"><rect x="4" y="4" width="19" height="19" rx="3"/><rect x="4" y="28" width="19" height="19" rx="3"/><rect x="28" y="28" width="19" height="19" rx="3"/><path d="M37.500 2.500L48 13.500 37.500 24.500 27 13.500z" stroke-linejoin="round"/></svg>功能</div>
      <div class="item hot"><svg width="50" height="50" viewBox="0 0 50 50" fill="none" stroke="#cc6534" stroke-width="2.800"><circle cx="25" cy="25" r="23"/><path d="M25 13v24M13 25h24"/></svg>加自选</div>
    </div>`;
  }
}

@customElement("system-nav")
class SystemNav extends LitElement {
  static styles = [shared, css`
    .nav { height: 123px; display: flex; justify-content: center; align-items: center; gap: 193px; padding-bottom: 7px; }
  `];
  render() {
    return html`<div class="nav">
      <svg width="40" height="40" viewBox="0 0 40 40"><path d="M4 5.500h32M4 20h32M4 34.500h32" stroke="#777" stroke-width="5" stroke-linecap="round"/></svg>
      <svg width="40" height="40" viewBox="0 0 40 40"><rect x="3" y="3.500" width="34" height="34" rx="7" fill="none" stroke="#777" stroke-width="4.500"/></svg>
      <svg width="40" height="40" viewBox="0 0 40 40"><path d="M28 4L8.500 20 28 36" fill="none" stroke="#777" stroke-width="4.500" stroke-linecap="round" stroke-linejoin="round"/></svg>
    </div>`;
  }
}

@customElement("app-root")
class AppRoot extends LitElement {
  static styles = [shared, css`
    :host { width: 1080px; height: 2400px; background: #fff; overflow: hidden; }
    .legend { height: 55px; border-bottom: 1px solid #d9d9d9; display: flex; align-items: center; padding-left: 12px; font-size: 32px; letter-spacing: -.8px; line-height: 54px; white-space: nowrap; }
    .lg { width: 92px; font-size: 30.500px; letter-spacing: 0; }
    .avg { color: #e0a04c; }
    .w1 { width: 105px; } .w2 { width: 111px; } .w3 { width: 69px; }
    .market { display: grid; grid-template-columns: 778px 302px; height: 1035px; }
  `];
  render() {
    return html`
      <status-bar></status-bar>
      <title-bar></title-bar>
      <quote-panel></quote-panel>
      <period-tabs></period-tabs>
      <div class="legend"><span class="lg avg">均价：</span><span class="w1 avg">103.28</span><span class="lg up">最新：</span><span class="w2 up">104.99</span><span class="w3 up">1.51</span><span class="up">1.46%</span></div>
      <div class="market"><div><price-chart></price-chart></div><trade-tape></trade-tape></div>
      <comment-entry></comment-entry>
      <ask-ai></ask-ai>
      <promo-banner></promo-banner>
      <forum-section></forum-section>
      <bottom-bar></bottom-bar>
      <system-nav></system-nav>`;
  }
}
